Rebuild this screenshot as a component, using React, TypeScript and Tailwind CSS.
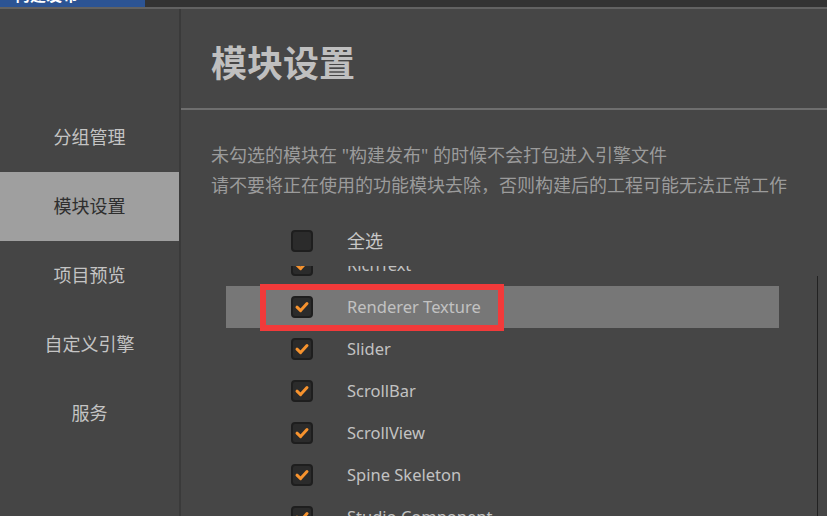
const FONT = { fontFamily: '"Noto Sans", "Noto Sans CJK SC", sans-serif' };

const navItems = ["分组管理", "模块设置", "项目预览", "自定义引擎", "服务"];

const modules = [
    "RichText",
    "Renderer Texture",
    "Slider",
    "ScrollBar",
    "ScrollView",
    "Spine Skeleton",
    "Studio Component",
];

const CheckBox = ({ checked }: { checked: boolean }) => (
    <div className="w-[22px] h-[22px] shrink-0 rounded-[4px] bg-[#2b2b2b] border-2 border-[#1e1e1e] flex items-center justify-center">
        {checked && (
            <svg width="16" height="16" viewBox="0 0 16 16">
                <path
                    d="M3 8.2 L6.6 11.6 L13 4.6"
                    fill="none"
                    stroke="#f7932e"
                    strokeWidth="3"
                    strokeLinecap="round"
                    strokeLinejoin="round"
                />
            </svg>
        )}
    </div>
);

const Row = ({ label, checked, active }: { label: string, checked: boolean, active?: boolean }) => (
    <div className={"relative h-[42px] flex items-center pl-[65px] " + (active ? "bg-[#777777]" : "")}>
        <CheckBox checked={checked} />
        <span className="ml-[34px] text-[16.5px] text-[#c2c2c2] leading-none">{label}</span>
        {active && (
            <div className="absolute left-[34px] top-[-2px] w-[244px] h-[47px] border-[6px] border-[#f23a3a]" />
        )}
    </div>
);

export default function App() {
    return (
        <div className="w-[827px] h-[516px] overflow-hidden bg-[#464646] flex flex-col" style={FONT}>
            {/* top strip */}
            <div className="h-[7px] flex shrink-0">
                <div className="w-[145px] bg-[#2c5494] overflow-hidden pl-[14px]">
                    <div className="text-white text-[16px] leading-[18px] mt-[-14px] font-bold">构建发布</div>
                </div>
                <div className="flex-1 bg-[#333333]" />
            </div>
            <div className="h-[2px] bg-[#626262] shrink-0" />

            <div className="flex-1 flex min-h-0">
                {/* sidebar */}
                <div className="w-[179px] bg-[#454545] pt-[94px] flex flex-col">
                    {navItems.map((item) => (
                        <div
                            key={item}
                            className={"h-[69px] flex items-center justify-center text-[18px] " + (item === "模块设置" ? "bg-[#9f9f9f] text-[#2e2e2e]" : "text-[#c4c4c4]")}
                        >
                            {item}
                        </div>
                    ))}
                </div>
                <div className="w-[2px] bg-[#3a3a3a]" />

                {/* main */}
                <div className="flex-1 flex flex-col min-w-0">
                    <div className="h-[101px] border-b-2 border-[#6e6e6e] pl-[30px] pt-[33px] shrink-0">
                        <h1 className="text-[36px] leading-[44px] font-bold text-[#bfbfbf]">模块设置</h1>
                    </div>

                    <div className="pl-[30px] pt-[30px] text-[18px] leading-[30px] text-[#9b9b9b] shrink-0">
                        <p>未勾选的模块在 "构建发布" 的时候不会打包进入引擎文件</p>
                        <p>请不要将正在使用的功能模块去除，否则构建后的工程可能无法正常工作</p>
                    </div>

                    <div className="pl-[45px] mt-[20px] shrink-0">
                        <div className="w-[553px] h-[42px] flex items-center pl-[65px]">
                            <CheckBox checked={false} />
                            <span className="ml-[34px] text-[18px] text-[#c8c8c8] leading-none">全选</span>
                        </div>
                    </div>

                    <div className="flex-1 mt-[4px] pl-[45px] flex min-h-0">
                        <div className="w-[553px] overflow-hidden">
                            <div className="mt-[-22px]">
                                {modules.map((m) => (
                                    <Row key={m} label={m} checked active={m === "Renderer Texture"} />
                                ))}
                            </div>
                        </div>
                        <div className="flex-1" />
                        <div className="w-[1px] mt-[10px] bg-[#222222]" />
                        <div className="w-[9px]" />
                    </div>
                </div>
            </div>
        </div>
    );
}
